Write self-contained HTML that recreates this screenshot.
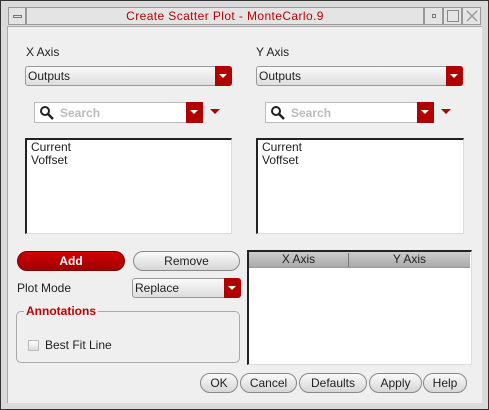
<!DOCTYPE html><html><head><style>
*{box-sizing:border-box;margin:0;padding:0}
body{width:489px;height:410px;background:#d6d6d6;font-family:"Liberation Sans",sans-serif;font-size:12px;color:#222;position:relative;overflow:hidden}
.a{position:absolute}
.frame{left:0;top:0;width:489px;height:410px;border:1px solid #333;background:#dadada}
.content{left:7px;top:26px;width:475px;height:377px;background:#efefef;border-top:1px solid #aaa;border-left:1px solid #aaa}
.tb{top:7px;height:18px;border:1px solid #999;background:#e4e4e4}
.dd{height:20px;border:1px solid #999;border-radius:3px;background:linear-gradient(#fafafa,#ddd);padding-left:2px;line-height:18px;font-size:12px}
.dd .r{position:absolute;right:-1px;top:-1px;width:17px;height:20px;background:#b00000;border-radius:0 3px 3px 0}
.tri{position:absolute;width:0;height:0;border-left:4px solid transparent;border-right:4px solid transparent;border-top:4px solid #fff;left:4px;top:8px}
.srch{height:21px;border:1px solid #bbb;background:#fff}
.list{background:#fff;border-left:2px solid #222;border-top:2px solid #222;border-right:1px solid #ddd;border-bottom:1px solid #ddd;padding:1px 4px;line-height:13px}
.btn{height:20px;border:1px solid #888;border-radius:10px;background:linear-gradient(#fafafa,#d6d6d6);text-align:center;line-height:18px;font-size:12px}
</style></head><body>
<div class="a frame"></div>
<div class="a tb" style="left:8px;width:18px"><div class="a" style="left:4px;top:7px;width:9px;height:3px;border:1px solid #777"></div></div>
<div class="a tb" style="left:26px;width:398px;text-align:center;color:#c00000;font-size:12px;line-height:16px;letter-spacing:0.4px">Create Scatter Plot - MonteCarlo.9</div>
<div class="a tb" style="left:424px;width:19px"><div class="a" style="left:7px;top:6px;width:4px;height:4px;border:1px solid #777"></div></div>
<div class="a tb" style="left:443px;width:19px"><div class="a" style="left:3px;top:2px;width:12px;height:12px;border:1px solid #888"></div></div>
<div class="a tb" style="left:462px;width:19px"><svg class="a" style="left:3px;top:2px" width="12" height="12"><path d="M1 1L11 11M11 1L1 11" stroke="#999" stroke-width="1.5"/></svg></div>
<div class="a content"></div>
<div class="a" style="left:26px;top:45px">X Axis</div>
<div class="a" style="left:256px;top:45px">Y Axis</div>
<div class="a dd" style="left:25px;top:66px;width:207px">Outputs<div class="r"><div class="tri"></div></div></div>
<div class="a dd" style="left:256px;top:66px;width:207px">Outputs<div class="r"><div class="tri"></div></div></div>
<div class="a srch" style="left:34px;top:102px;width:169px"><svg class="a" style="left:4px;top:2px" width="16" height="16"><circle cx="6" cy="6" r="4" fill="none" stroke="#222" stroke-width="2"/><path d="M9 9L14 14" stroke="#222" stroke-width="2.5"/></svg><span class="a" style="left:25px;top:3px;color:#bbb;font-weight:bold">Search</span><div class="a" style="right:-1px;top:-1px;width:17px;height:21px;background:#b00000"><div class="tri"></div></div></div>
<div class="a" style="left:210px;top:109px;border-left:5px solid transparent;border-right:5px solid transparent;border-top:5px solid #b00000"></div>
<div class="a srch" style="left:265px;top:102px;width:169px"><svg class="a" style="left:4px;top:2px" width="16" height="16"><circle cx="6" cy="6" r="4" fill="none" stroke="#222" stroke-width="2"/><path d="M9 9L14 14" stroke="#222" stroke-width="2.5"/></svg><span class="a" style="left:25px;top:3px;color:#bbb;font-weight:bold">Search</span><div class="a" style="right:-1px;top:-1px;width:17px;height:21px;background:#b00000"><div class="tri"></div></div></div>
<div class="a" style="left:441px;top:109px;border-left:5px solid transparent;border-right:5px solid transparent;border-top:5px solid #b00000"></div>
<div class="a list" style="left:25px;top:138px;width:207px;height:96px">Current<br>Voffset</div>
<div class="a list" style="left:256px;top:138px;width:208px;height:96px">Current<br>Voffset</div>
<div class="a btn" style="left:17px;top:251px;width:108px;background:linear-gradient(#d00000,#a00000);color:#fff;font-weight:bold;border-color:#700">Add</div>
<div class="a btn" style="left:133px;top:251px;width:107px">Remove</div>
<div class="a" style="left:17px;top:281px">Plot Mode</div>
<div class="a dd" style="left:132px;top:278px;width:109px">Replace<div class="r"><div class="tri"></div></div></div>
<div class="a" style="left:16px;top:311px;width:224px;height:52px;border:1px solid #aaa;border-radius:5px"></div>
<div class="a" style="left:24px;top:304px;background:#efefef;color:#c00000;font-weight:bold;padding:0 2px">Annotations</div>
<div class="a" style="left:28px;top:340px;width:11px;height:11px;border:1px solid #bbb;background:linear-gradient(#fff,#ddd)"></div>
<div class="a" style="left:45px;top:338px">Best Fit Line</div>
<div class="a" style="left:247px;top:250px;width:225px;height:115px;background:#fff;border-left:2px solid #222;border-top:2px solid #222;border-right:1px solid #ddd;border-bottom:1px solid #ddd"></div>
<div class="a" style="left:249px;top:252px;width:221px;height:16px;background:linear-gradient(#ccc,#aaa);border-bottom:1px solid #999"></div>
<div class="a" style="left:348px;top:253px;width:1px;height:14px;background:#777"></div>
<div class="a" style="left:249px;top:252px;width:99px;text-align:center">X Axis</div>
<div class="a" style="left:349px;top:252px;width:121px;text-align:center">Y Axis</div>
<div class="a btn" style="left:200px;top:373px;width:38px">OK</div>
<div class="a btn" style="left:240px;top:373px;width:57px">Cancel</div>
<div class="a btn" style="left:299px;top:373px;width:68px">Defaults</div>
<div class="a btn" style="left:369px;top:373px;width:53px">Apply</div>
<div class="a btn" style="left:423px;top:373px;width:44px">Help</div>
</body></html>
